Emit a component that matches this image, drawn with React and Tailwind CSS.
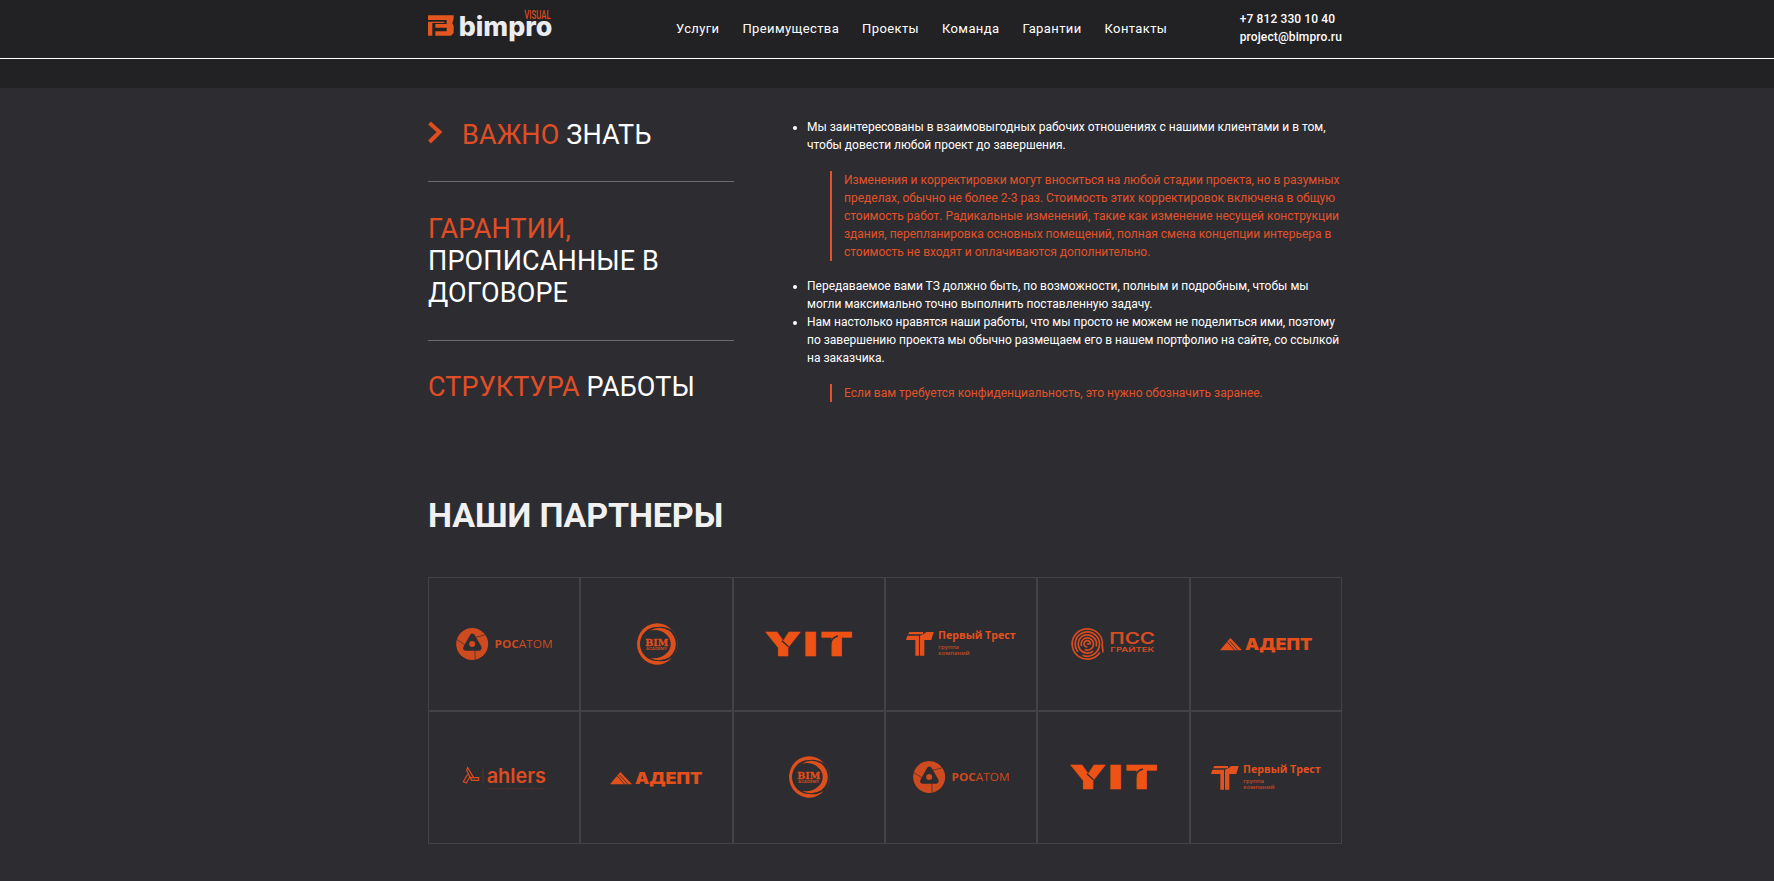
const NAV = ["Услуги", "Преимущества", "Проекты", "Команда", "Гарантии", "Контакты"];

function BrandLogo() {
  return (
    <svg className="mt-[7px] h-[34px] w-[126px] shrink-0 self-start overflow-visible" viewBox="24 21 378 102" fill="#e4561f">
      <path d="M24 46H101V56L97 70L101 79V99L93 107H46V94H80V83H46V72H80V60H24Z" />
      <path d="M24 65H73V69H37V107H24Z" />
      <text x="116" y="107" textLength="281" lengthAdjust="spacingAndGlyphs" fontSize="80" fontWeight="800" fontFamily="Inter, sans-serif" fill="#ebecf0">bimpro</text>
      <text x="313" y="56" textLength="79" lengthAdjust="spacingAndGlyphs" fontSize="38" fontWeight="500" fontFamily="Roboto, sans-serif" fill="#dd4a22">VISUAL</text>
    </svg>
  );
}

function Rosatom() {
  return (
    <svg className="h-8 w-[97px] overflow-visible" viewBox="108 174 290 96" fill="#cf4a1e">
      <circle cx="156" cy="222" r="48" />
      <path d="M164 240L165 270M166 202L196 194M134 224L109 208" stroke="#2d2c31" strokeWidth="2" fill="none" />
      <path fill="#2d2c31" d="M150 194Q156 187 163 194L184 230Q186 241 176 242H136Q126 240 130 230Z" />
      <circle cx="156" cy="222" r="9" />
      <text x="223" y="234" textLength="174" lengthAdjust="spacingAndGlyphs" fontSize="34" fontFamily="'Open Sans', sans-serif">
        <tspan fontWeight="700">РОС</tspan>АТОМ
      </text>
    </svg>
  );
}

function BimAcademy() {
  return (
    <svg className="ml-px h-[42px] w-10 overflow-visible" viewBox="651 159 120 126" fill="#dd4f1c">
      <path fillRule="evenodd" d="M711 160A60 62 0 1 0 756 263Q736 277 711 273A50 50 0 0 1 711 171Q736 167 756 181A60 62 0 0 0 711 160Z" />
      <path d="M690 182Q718 164 748 182A54 52 0 0 1 748 262Q720 278 690 264Q718 268 736 253A44 40 0 0 0 736 191Q718 176 690 182Z" />
      <path d="M746 170A62 62 0 0 1 746 274A72 66 0 0 0 746 170Z" />
      <text x="676" y="228" textLength="69" lengthAdjust="spacingAndGlyphs" fontSize="28" fontWeight="900" fontFamily="'DejaVu Serif', serif" stroke="#dd4f1c">BIM</text>
      <text x="678" y="241" textLength="64" lengthAdjust="spacingAndGlyphs" fontSize="12" fontWeight="600" fontFamily="Inter, sans-serif">ACADEMY</text>
    </svg>
  );
}

function Yit() {
  return (
    <svg className="h-6 w-[87px] overflow-visible" viewBox="108 186 260 72" fill="#ee5215">
      <g fontSize="97" fontWeight="900" fontFamily="Inter, sans-serif" stroke="#ee5215" strokeWidth="2">
        <text x="107" y="257" textLength="108" lengthAdjust="spacingAndGlyphs">Y</text>
        <text x="223" y="257" textLength="42" lengthAdjust="spacingAndGlyphs">I</text>
        <text x="274" y="257" textLength="96" lengthAdjust="spacingAndGlyphs">T</text>
      </g>
      <path d="M158 212L178 230M305 222Q305 204 326 198" stroke="#2d2c31" strokeWidth="4" fill="none" />
    </svg>
  );
}

function FirstTrust() {
  return (
    <svg className="h-[25px] w-[110px] overflow-visible" viewBox="527 184 330 75" fill="#e4511d">
      <path d="M537 187H578V194H533Z" />
      <path d="M531 198H566V258H555V211H527Z" />
      <path d="M588 187H610L603 211H582V258H569V198Q578 196 588 187Z" />
      <text x="623" y="209" textLength="233" lengthAdjust="spacingAndGlyphs" fontSize="30" fontWeight="700" fontFamily="'Open Sans', sans-serif">Первый Трест</text>
      <text x="624" y="239" textLength="62" lengthAdjust="spacingAndGlyphs" fontSize="16" fontWeight="600" fontFamily="'Open Sans', sans-serif" opacity=".8">группа</text>
      <text x="624" y="257" textLength="94" lengthAdjust="spacingAndGlyphs" fontSize="16" fontWeight="600" fontFamily="'Open Sans', sans-serif" opacity=".8">компаний</text>
    </svg>
  );
}

function PssGraitec() {
  return (
    <svg className="h-8 w-[83px] overflow-visible" viewBox="110 174 249 96" fill="#d94c22">
      <g fill="none" stroke="#d94c22" strokeWidth="5">
        <circle cx="156" cy="222" r="45.500" pathLength="100" strokeDasharray="93 7" transform="rotate(34 156 222)" />
        <circle cx="156" cy="222" r="36.500" pathLength="100" strokeDasharray="92 8" transform="rotate(140 156 222)" />
        <circle cx="156" cy="222" r="27.500" pathLength="100" strokeDasharray="90 10" transform="rotate(50 156 222)" />
        <circle cx="156" cy="222" r="18.500" pathLength="100" strokeDasharray="86 14" transform="rotate(160 156 222)" />
        <path d="M165 222A9.500 9.500 0 1 0 156 231" />
        <path d="M201 228L203 247M155 222H166" />
      </g>
      <text x="222" y="223" textLength="137" lengthAdjust="spacingAndGlyphs" fontSize="46" fontWeight="600" fontFamily="Inter, sans-serif">ПСС</text>
      <text x="225" y="246" textLength="132" lengthAdjust="spacingAndGlyphs" fontSize="19" fontWeight="600" fontFamily="Inter, sans-serif">ГРАЙТЕК</text>
    </svg>
  );
}

function Adept() {
  return (
    <svg className="h-[13px] w-[92px] overflow-visible" viewBox="555 201 276 39" fill="#e4501c">
      <path d="M586 204L621 241H555Z" />
      <path d="M576 215L600 242M584 213L608 240" stroke="#2d2c31" strokeWidth="2.500" />
      <text x="630" y="240" textLength="202" lengthAdjust="spacingAndGlyphs" fontSize="49" fontWeight="900" fontFamily="Inter, sans-serif">АДЕПТ</text>
    </svg>
  );
}

function Ahlers() {
  return (
    <svg className="h-6 w-[84px] overflow-visible" viewBox="127 194 252 72" fill="#dc4d22">
      <g fill="none" stroke="#dc4d22" strokeWidth="3.500">
        <path d="M144 202L162 232H177V240H156L141 210Z" />
        <path d="M152 226L140 248L131 244L144 222M152 232H162" />
      </g>
      <path d="M190 206V250" stroke="#6d382f" strokeWidth="2" />
      <text x="201" y="248" textLength="178" lengthAdjust="spacingAndGlyphs" fontSize="62" fontWeight="600" fontFamily="Inter, sans-serif">ahlers</text>
      <path d="M204 265H374" stroke="#5c342f" strokeWidth="4" strokeDasharray="5 4" />
    </svg>
  );
}

const PARTNERS = [Rosatom, BimAcademy, Yit, FirstTrust, PssGraitec, Adept, Ahlers, Adept, BimAcademy, Rosatom, Yit, FirstTrust];

function Note({ className, children }) {
  return (
    <blockquote className={`ml-[37px] border-l-2 border-[#e2532a] pl-3 text-[#e2532a] ${className}`}>{children}</blockquote>
  );
}

export default function App() {
  return (
    <div className="h-[881px] overflow-hidden bg-[#2d2c31] font-['Roboto',sans-serif] text-white">
      <header className="h-[59px] border-b border-white bg-[#222224] pr-1">
        <div className="mx-auto flex h-[58px] w-[914px] items-center">
          <BrandLogo />
          <nav className="ml-[122px] flex gap-[23px] text-[13px] tracking-[0.38px]">
            {NAV.map((item) => (
              <a key={item}>{item}</a>
            ))}
          </nav>
          <address className="mb-[3px] ml-auto text-xs leading-[18px] font-medium tracking-[0.12px] not-italic">
            +7 812 330 10 40
            <br />
            project@bimpro.ru
          </address>
        </div>
      </header>
      <div className="h-[29px] bg-[#222224]" />

      <div className="pr-1">
        <main className="mx-auto w-[914px]">
          <section className="flex pt-[30px]">
            <div className="w-[306px] text-[27px] leading-8 tracking-[0.13px]">
              <div className="flex items-start border-b border-[#6c6b70] pb-[30px] pt-px">
                <svg className="mt-px mr-[19px] h-[24px] w-[15px]" viewBox="0 0 15 24" fill="none" stroke="#e04e20" strokeWidth="4">
                  <path d="M1.500 3L11.500 12L1.500 22" />
                </svg>
                <h2><span className="text-[#e04e26]">ВАЖНО</span> ЗНАТЬ</h2>
              </div>
              <h2 className="border-b border-[#6c6b70] pt-[31px] pb-[31px]">
                <span className="text-[#e04e26]">ГАРАНТИИ,</span><br />ПРОПИСАННЫЕ В<br />ДОГОВОРЕ
              </h2>
              <h2 className="pt-[30px]"><span className="text-[#e04e26]">СТРУКТУРА</span> РАБОТЫ</h2>
            </div>

            <div className="ml-[59px] flex-1 text-xs leading-[18px] whitespace-nowrap">
              <ul className="list-disc pl-3.5">
                <li>Мы заинтересованы в взаимовыгодных рабочих отношениях с нашими клиентами и в том,<br />чтобы довести любой проект до завершения.</li>
              </ul>
              <Note className="mt-[17px]">
                Изменения и корректировки могут вноситься на любой стадии проекта, но в разумных<br />
                пределах, обычно не более 2-3 раз. Стоимость этих корректировок включена в общую<br />
                стоимость работ. Радикальные изменений, такие как изменение несущей конструкции<br />
                здания, перепланировка основных помещений, полная смена концепции интерьера в<br />
                стоимость не входят и оплачиваются дополнительно.
              </Note>
              <ul className="mt-4 list-disc pl-3.5">
                <li>Передаваемое вами ТЗ должно быть, по возможности, полным и подробным, чтобы мы<br />могли максимально точно выполнить поставленную задачу.</li>
                <li>Нам настолько нравятся наши работы, что мы просто не можем не поделиться ими, поэтому<br />по завершению проекта мы обычно размещаем его в нашем портфолио на сайте, со ссылкой<br />на заказчика.</li>
              </ul>
              <Note className="mt-[17px]">Если вам требуется конфиденциальность, это нужно обозначить заранее.</Note>
            </div>
          </section>

          <h1 className="mt-[92px] text-[34px] leading-10 font-bold tracking-[-0.1px] text-[#f1f1f1]">НАШИ ПАРТНЕРЫ</h1>

          <section className="mt-[42px] grid h-[267px] grid-cols-6 grid-rows-2">
            {PARTNERS.map((Logo, i) => (
              <div key={i} className="flex items-center justify-center border border-[#434247]">
                <Logo />
              </div>
            ))}
          </section>
        </main>
      </div>
    </div>
  );
}
